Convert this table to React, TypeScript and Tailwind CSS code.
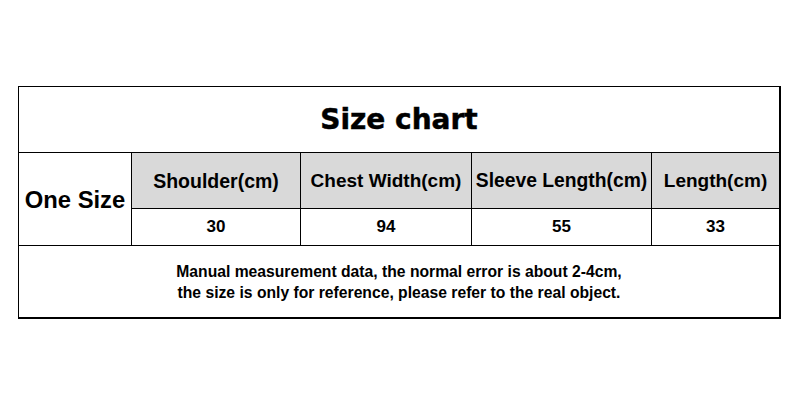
import React from 'react';

const headers = [
  { label: 'Shoulder(cm)', size: 'text-[19.5px]' },
  { label: 'Chest Width(cm)', size: 'text-[19px]' },
  { label: 'Sleeve Length(cm)', size: 'text-[19.3px]' },
  { label: 'Length(cm)', size: 'text-[19px]' },
];

const values = ['30', '94', '55', '33'];

const App: React.FC = () => {
  return (
    <div className="w-[800px] h-[404px] bg-white pt-[86px] pl-[18px] font-['Liberation_Sans',Arial,sans-serif] font-bold text-black">
      <div className="w-[763px] border-l border-t border-r-2 border-b-2 border-black">
        {/* Title */}
        <div className="h-[66px] border-b border-black flex items-center justify-center">
          <span className="font-['DejaVu_Sans',sans-serif] text-[28px] leading-none [-webkit-text-stroke:0.5px_black]">Size chart</span>
        </div>

        {/* Sizes table */}
        <div className="grid grid-cols-[113px_169px_171px_180px_1fr] grid-rows-[56px_36px] border-b border-black">
          <div className="row-span-2 border-r border-black flex items-center justify-center text-[23.8px] pt-[2px]">
            One Size
          </div>
          {headers.map((h, i) => (
            <div
              key={h.label}
              className={`bg-[#d9d9d9] border-b border-black flex items-center justify-center whitespace-nowrap pt-[2px] ${h.size} ${i < 3 ? 'border-r' : ''}`}
            >
              {h.label}
            </div>
          ))}
          {values.map((v, i) => (
            <div
              key={i}
              className={`flex items-center justify-center text-[17px] border-black ${i < 3 ? 'border-r' : ''}`}
            >
              {v}
            </div>
          ))}
        </div>

        {/* Note */}
        <div className="h-[71px] flex flex-col items-center justify-center text-[15.7px] leading-[21px] pt-[1px]">
          <p>Manual measurement data, the normal error is about 2-4cm,</p>
          <p>the size is only for reference, please refer to the real object.</p>
        </div>
      </div>
    </div>
  );
};

export default App;
